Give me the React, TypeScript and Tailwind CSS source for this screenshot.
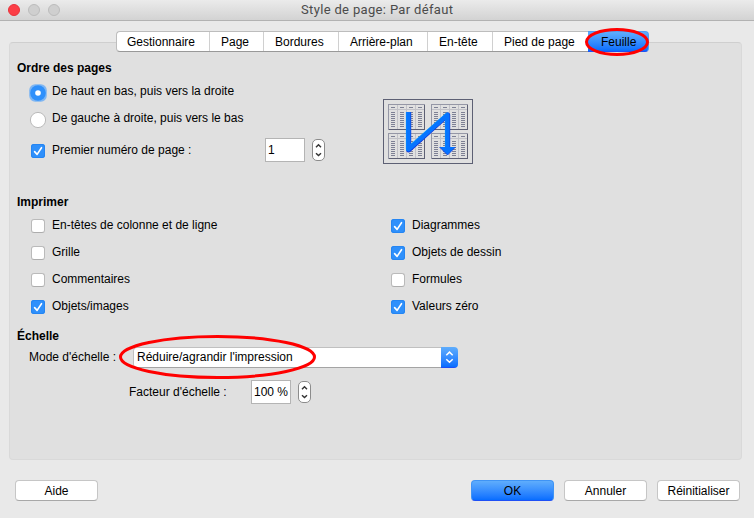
import React from "react";

const columns = [0, 9, 18, 27];
const bodyRows = [0, 2, 4, 6, 8, 10, 12, 14];

function Sheet({ x, y }: { x: number; y: number }) {
  return (
    <g transform={`translate(${x} ${y})`} shapeRendering="crispEdges">
      <rect width="37" height="26" fill="#e0e0e0" />
      <path d="M0 5h36v1H0zM9 0h1v25H9zM18 0h1v25h-1zM27 0h1v25h-1z" fill="#c2c2c8" />
      <path d="M0 0h37v1H1v25H0z" fill="#9597a6" />
      <path d="M36 1h1v25H1v-1h35z" fill="#5d6074" />
      {columns.map((c) => (
        <g key={c} fill="#7d8094">
          <rect x={c + 3} y="3" width="4" height="1" />
          {bodyRows.map((r) => (
            <rect key={r} x={c + 3} y={8 + r} width="4" height="1" />
          ))}
        </g>
      ))}
    </g>
  );
}

function OrderPreview() {
  return (
    <svg width="90" height="65" viewBox="0 0 90 65" className="block">
      <rect x=".5" y=".5" width="89" height="64" fill="none" stroke="#5d6074" />
      <Sheet x={5} y={5} />
      <Sheet x={48} y={5} />
      <Sheet x={5} y={34} />
      <Sheet x={48} y={34} />
      <path d="M25.7 13V51L64.7 16V49" fill="none" stroke="#1238dc" strokeWidth="5" strokeLinejoin="round" />
      <path d="M25 13V50L64 15.8V49" fill="none" stroke="#0aa0ff" strokeWidth="4.2" strokeLinejoin="round" />
      <path d="M25.4 13V50.5L64.4 16V49" fill="none" stroke="#0674ff" strokeWidth="4.2" strokeLinejoin="round" />
      <path d="M56.5 48h16l-8 8z" fill="#0674ff" />
      <path d="M72.5 48l-8 8-8-8" fill="none" stroke="#1238dc" strokeWidth=".8" />
    </svg>
  );
}

function Check({ on }: { on?: boolean }) {
  return on ? (
    <span className="mt-px block h-[14px] w-[14px] rounded-[3px] bg-[#2f90fb] shadow-[inset_0_0_0_1px_#2585f2]">
      <svg width="14" height="14" viewBox="0 0 14 14" className="block">
        <path d="M3.6 7.6l2.5 2.8 4.4-6.7" fill="none" stroke="#fff" strokeWidth="1.6" strokeLinecap="round" strokeLinejoin="round" />
      </svg>
    </span>
  ) : (
    <span className="mt-px block h-[14px] w-[14px] rounded-[3px] border border-[#bababa] border-b-[#adadad] bg-white" />
  );
}

function CheckRow({ on, children }: { on?: boolean; children: React.ReactNode }) {
  return (
    <label className="flex h-[27px] items-start gap-[7px]">
      <Check on={on} />
      <span>{children}</span>
    </label>
  );
}

function Radio({ on }: { on?: boolean }) {
  return (
    <svg width="18" height="18" viewBox="0 0 18 18" className="-ml-[2px] block">
      {on ? (
        <>
          <rect x=".2" y=".2" width="17.6" height="17.6" rx="6" fill="#7fb6f2" />
          <circle cx="9" cy="9" r="7.8" fill="#2f90fb" />
          <circle cx="9" cy="9" r="2.8" fill="#fff" />
        </>
      ) : (
        <circle cx="9" cy="9" r="7.6" fill="#fff" stroke="#b4b4b4" strokeWidth=".9" />
      )}
    </svg>
  );
}

function Spinner({ value, pad }: { value: string; pad: string }) {
  return (
    <span className="flex items-start gap-[7px]">
      <span className={`block h-6 w-10 border border-[#b4b4b4] bg-white pt-1 ${pad}`}>{value}</span>
      <svg width="13" height="22" viewBox="0 0 13 22" className="mt-px block">
        <rect x=".5" y=".5" width="12" height="21" rx="4.5" fill="#fff" stroke="#8c8c8c" />
        <path d="M4 8.2l2.5-2.4L9 8.2M4 14.2l2.5 2.4L9 14.2" fill="none" stroke="#333" strokeWidth="1.4" />
      </svg>
    </span>
  );
}

const tabs = [
  { label: "Gestionnaire", box: "w-[93px] pl-[10px]" },
  { label: "Page", box: "w-[54px] pl-[11px]" },
  { label: "Bordures", box: "w-[75px] pl-[11px]" },
  { label: "Arrière-plan", box: "w-[89px] pl-[11px]" },
  { label: "En-tête", box: "w-[65px] pl-[11px]" },
  { label: "Pied de page", box: "w-[95px] pl-[11px]" },
];

const blue = "bg-linear-to-b from-[#5fadfc] to-[#066dff]";

function Button({ primary, children }: { primary?: boolean; children: React.ReactNode }) {
  return (
    <button
      className={`flex h-[21px] w-[83px] justify-center rounded-[4px] border pt-[3px] ${
        primary
          ? "border-[#3f94f5] border-b-[#1e50f5] bg-linear-to-b from-[#5fadfc] to-[#066dff]"
          : "border-[#c6c6c6] border-b-[#a8a8a8] bg-white"
      }`}
    >
      {children}
    </button>
  );
}

export default function App() {
  return (
    <div className="relative h-[518px] w-[754px] overflow-hidden bg-[#e9e9e9] font-['Liberation_Sans',Arial,sans-serif] text-[12px] leading-[14px] whitespace-nowrap text-black">
      <header className="flex h-[21px] items-start border-b border-[#b2b2b2] bg-linear-to-b from-[#ebebeb] to-[#d3d3d3] pl-2">
        <div className="flex gap-2 pt-1">
          <span className="h-3 w-3 rounded-full border border-[#e8323b] bg-[#fc3e46]" />
          <span className="h-3 w-3 rounded-full border border-[#bcbcbc] bg-[#cfcfcf]" />
          <span className="h-3 w-3 rounded-full border border-[#bcbcbc] bg-[#cfcfcf]" />
        </div>
        <h1 className="ml-[241px] pt-[2px] font-['Roboto',sans-serif] text-[13px] leading-4 tracking-[0.34px] text-[#4b4b4b]">Style de page: Par défaut</h1>
      </header>

      <nav className="relative z-10 mt-[10px] ml-[116px] flex h-[21px] w-[533px]">
        <div className="flex rounded-l-[4px] border border-r-0 border-[#bdbdbd] border-b-[#999] bg-white">
          {tabs.map((t, i) => (
            <div key={t.label} className={`pt-[3px] ${t.box} ${i < 5 ? "border-r border-[#d0d0d0]" : ""}`}>
              {t.label}
            </div>
          ))}
        </div>
        <div className={`flex-1 rounded-r-[4px] border border-l-0 border-[#4f9ff5] border-b-[#1e50f5] pt-[3px] pl-[13px] ${blue}`}>Feuille</div>
      </nav>

      <main className="-mt-[10px] ml-[9px] h-[418px] w-[733px] rounded-[4px] border border-[#d9d9d9] border-t-[#cfcfcf] bg-[#e0e0e0] pt-[18px] pl-[7px]">
        <h2 className="font-bold">Ordre des pages</h2>
        <section className="mt-[9px] flex h-[111px]">
          <div className="w-[366px] pl-[14px]">
            <label className="flex h-[27px] items-start gap-[5px]">
              <Radio on />
              <span>De haut en bas, puis vers la droite</span>
            </label>
            <label className="flex h-[27px] items-start gap-[5px]">
              <Radio />
              <span>De gauche à droite, puis vers le bas</span>
            </label>
            <div className="flex">
              <div className="w-[234px] pt-[5px]">
                <CheckRow on>Premier numéro de page :</CheckRow>
              </div>
              <Spinner value="1" pad="pl-[2px]" />
            </div>
          </div>
          <div className="pt-[15px]">
            <OrderPreview />
          </div>
        </section>

        <h2 className="font-bold">Imprimer</h2>
        <section className="mt-[9px] flex pl-[14px]">
          <div className="w-[360px]">
            <CheckRow>En-têtes de colonne et de ligne</CheckRow>
            <CheckRow>Grille</CheckRow>
            <CheckRow>Commentaires</CheckRow>
            <CheckRow on>Objets/images</CheckRow>
          </div>
          <div>
            <CheckRow on>Diagrammes</CheckRow>
            <CheckRow on>Objets de dessin</CheckRow>
            <CheckRow>Formules</CheckRow>
            <CheckRow on>Valeurs zéro</CheckRow>
          </div>
        </section>

        <h2 className="mt-[3px] font-bold">Échelle</h2>
        <section className="mt-1">
          <div className="flex pl-3">
            <span className="w-[104px] pt-[3px]">Mode d'échelle :</span>
            <div className="flex h-[21px] w-[325px] overflow-hidden rounded-[4px]">
              <span className="flex-1 rounded-l-[4px] border border-r-0 border-[#c0c0c0] border-b-[#a4a4a4] bg-white pt-[2px] pl-[3px]">
                Réduire/agrandir l'impression
              </span>
              <span className={`w-[17px] border-b border-[#1e50f5] ${blue}`}>
                <svg width="17" height="20" viewBox="0 0 17 20" className="block">
                  <path d="M5.3 8.2l3.2-3.1 3.2 3.1M5.3 12.2l3.2 3.1 3.2-3.1" fill="none" stroke="#fff" strokeWidth="1.5" />
                </svg>
              </span>
            </div>
          </div>
          <div className="mt-3 flex pl-[112px]">
            <span className="w-[122px] pt-[5px]">Facteur d'échelle :</span>
            <Spinner value="100 %" pad="pl-[2px]" />
          </div>
        </section>
      </main>

      <footer className="mt-5 ml-[15px] flex w-[725px] gap-[10px]">
        <Button>Aide</Button>
        <div className="flex-1" />
        <Button primary>OK</Button>
        <Button>Annuler</Button>
        <Button>Réinitialiser</Button>
      </footer>

      <svg width="754" height="518" viewBox="0 0 754 518" className="pointer-events-none absolute inset-0 z-20" fill="none" stroke="#ff0000" strokeWidth="3">
        <ellipse cx="617" cy="42" rx="30.5" ry="12.5" />
        <ellipse cx="217.5" cy="357" rx="97" ry="20.5" />
      </svg>
    </div>
  );
}
